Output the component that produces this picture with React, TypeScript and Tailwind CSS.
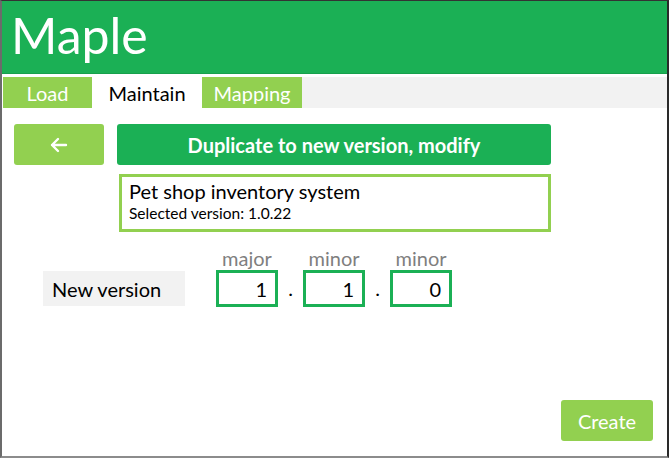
import React from 'react';

const font = { fontFamily: 'Lato, "Open Sans", sans-serif' };

const VersionField = ({ label, value }: { label: string; value: string }) => (
  <div className="flex flex-col items-center">
    <span className="text-[20px] leading-[22px] text-[#7f7f7f]">{label}</span>
    <div className="mt-[1px] w-[62px] h-[37px] border-[3px] border-[#1bb055] flex items-center justify-end pr-[8px] text-[20px] text-black">
      {value}
    </div>
  </div>
);

export default function App() {
  return (
    <div className="w-[672px] h-[460px] bg-white" style={font}>
      <div className="w-[669px] h-[458px] border-l-2 border-l-[#6b6b6b] border-t border-t-[#333] border-r-2 border-r-[#2a2a2a] border-b-2 border-b-[#8c8c8c] flex flex-col">
        {/* Header */}
        <div className="h-[73px] bg-[#1bb055] flex items-center pl-[9px] border-b border-[#17a04c]">
          <span className="text-white text-[50px] leading-none pb-[4px]">Maple</span>
        </div>

        {/* Tabs */}
        <div className="mt-[3px] h-[31px] flex bg-[#f2f2f2] ml-[1px]">
          <div className="w-[89px] bg-[#92d050] text-white text-[20px] flex items-center justify-center">Load</div>
          <div className="w-[110px] bg-white text-black text-[20px] flex items-center justify-center">Maintain</div>
          <div className="w-[100px] bg-[#92d050] text-white text-[20px] flex items-center justify-center">Mapping</div>
        </div>

        {/* Actions */}
        <div className="flex mt-[16px] ml-[12px] gap-[13px]">
          <button className="w-[90px] h-[41px] rounded-[3px] bg-[#92d050] flex items-center justify-center">
            <svg width="20" height="18" viewBox="0 0 20 18" fill="none" stroke="white" strokeWidth="2.4" strokeLinecap="round" strokeLinejoin="round">
              <path d="M17 9H3M9 3L3 9l6 6" />
            </svg>
          </button>
          <button className="w-[434px] h-[41px] rounded-[3px] bg-[#1bb055] text-white font-bold text-[20px]">
            Duplicate to new version, modify
          </button>
        </div>

        {/* Info */}
        <div className="ml-[117px] mt-[9px] w-[432px] h-[58px] border-[3px] border-[#92d050] px-[7px] pt-[2px]">
          <div className="text-[20px] leading-[25px] text-black">Pet shop inventory system</div>
          <div className="text-[15.5px] leading-[19px] text-black">Selected version: 1.0.22</div>
        </div>

        {/* New version */}
        <div className="flex items-end mt-[15px] ml-[41px]">
          <div className="w-[142px] h-[35px] bg-[#f2f2f2] flex items-center pl-[9px] text-[20px] text-black mb-[1px]">
            New version
          </div>
          <div className="ml-[31px] flex items-end">
            <VersionField label="major" value="1" />
            <span className="w-[25px] text-center text-[20px] pb-[4px]">.</span>
            <VersionField label="minor" value="1" />
            <span className="w-[25px] text-center text-[20px] pb-[4px]">.</span>
            <VersionField label="minor" value="0" />
          </div>
        </div>

        {/* Footer */}
        <div className="flex-1 flex items-end justify-end pr-[14px] pb-[15px]">
          <button className="w-[92px] h-[41px] rounded-[3px] bg-[#92d050] text-white text-[20px]">Create</button>
        </div>
      </div>
    </div>
  );
}
